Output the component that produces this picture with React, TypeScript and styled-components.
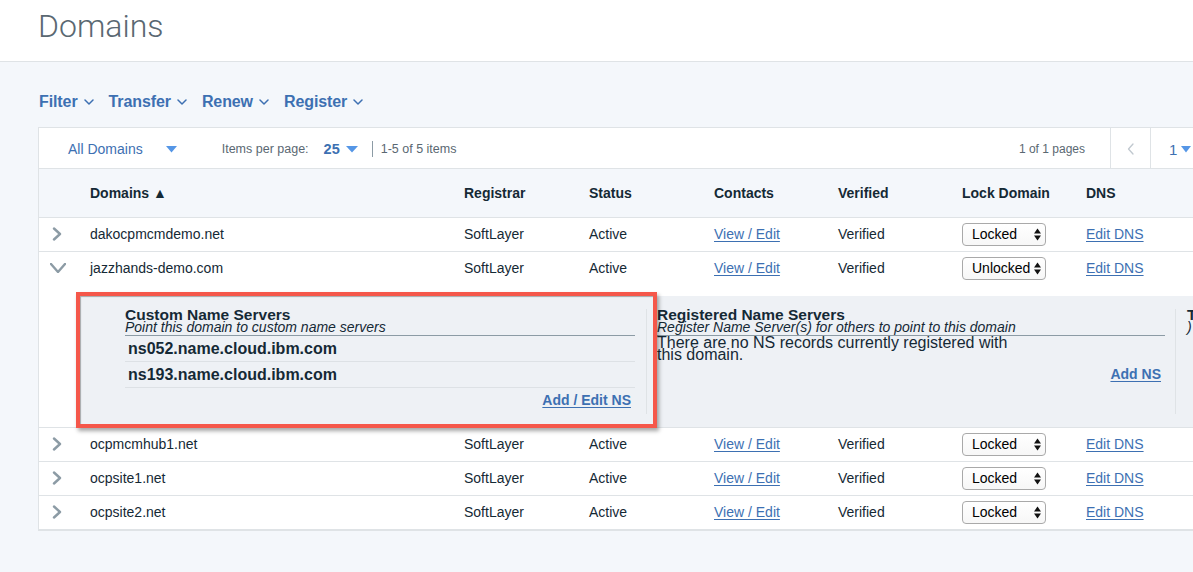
import React from "react";
import styled, { createGlobalStyle } from "styled-components";

const Global = createGlobalStyle`
  html, body { margin: 0; padding: 0; background: #f4f7fb; overflow: hidden; }
  body { font-family: "Liberation Sans", Arial, sans-serif; color: #152935; }
  * { box-sizing: border-box; }
`;

const BLUE = "#3d70b2";
const LIGHTBLUE = "#5596e6";
const BORDER = "#dfe3e6";
const COLS = "51px 374px 125px 125px 124px 124px 124px 1fr";

const Page = styled.div`
  position: relative;
  width: 1193px;
  height: 572px;
  overflow: hidden;
  background: #f4f7fb;
`;

const Header = styled.header`
  height: 62px;
  background: #fff;
  border-bottom: 1px solid ${BORDER};
  padding-left: 38px;
`;

const Title = styled.h1`
  margin: 0;
  padding-top: 7px;
  font-family: Roboto, "Liberation Sans", sans-serif;
  font-weight: 300;
  font-size: 32px;
  line-height: normal;
  color: #5a6872;
`;

const Menu = styled.nav`
  display: flex;
  align-items: center;
  height: 20px;
  margin: 30px 0 15px 39px;
`;

const MenuItem = styled.span`
  display: flex;
  align-items: center;
  gap: 6px;
  margin-right: 15px;
  font-weight: 700;
  font-size: 16px;
  letter-spacing: -0.1px;
  line-height: 20px;
  color: ${BLUE};
`;

const Table = styled.section`
  margin-left: 38px;
  width: 1185px;
  background: #fff;
  border: 1px solid ${BORDER};
`;

const Toolbar = styled.div`
  display: flex;
  align-items: stretch;
  height: 41px;
  border-bottom: 1px solid ${BORDER};
`;

const ToolGroup = styled.div`
  display: flex;
  align-items: center;
  flex: 1;
  padding: 2px 0 0 29px;
`;

const DomainPick = styled.span`
  font-size: 14px;
  color: ${BLUE};
  margin-right: 23px;
`;

const Small = styled.span<{ $ml?: number }>`
  font-size: 12.5px;
  color: #5a6872;
  margin-left: ${(p) => p.$ml ?? 0}px;
`;

const PerPage = styled.span`
  font-size: 14.5px;
  font-weight: 700;
  color: ${BLUE};
  margin: 0 6px 0 15px;
`;

const Sep = styled.span`
  width: 1px;
  height: 16px;
  background: #8c9ba5;
  margin: 0 8px 0 14px;
`;

const PagesInfo = styled.span`
  display: flex;
  align-items: center;
  padding: 2px 25px 0 0;
  font-size: 12px;
  color: #5a6872;
`;

const NavCell = styled.span<{ $w: number; $pl: number }>`
  display: flex;
  align-items: center;
  width: ${(p) => p.$w}px;
  padding: 2px 0 0 ${(p) => p.$pl}px;
  border-left: 1px solid ${BORDER};
  gap: 4px;
  font-size: 15px;
  color: ${BLUE};
`;

const HeadRow = styled.div`
  display: grid;
  grid-template-columns: ${COLS};
  align-items: center;
  height: 49px;
  background: #f4f7fb;
  border-bottom: 1px solid ${BORDER};
  font-size: 14px;
  font-weight: 700;
  color: #152935;
`;

const Row = styled.div<{ $open?: boolean }>`
  display: grid;
  grid-template-columns: ${COLS};
  align-items: center;
  height: ${(p) => (p.$open ? 33 : 34)}px;
  padding-bottom: 1px;
  border-bottom: ${(p) => (p.$open ? "none" : `1px solid ${BORDER}`)};
  font-size: 14px;
  color: #152935;
`;

const ToggleCell = styled.span<{ $open?: boolean }>`
  display: flex;
  align-items: center;
  padding-left: ${(p) => (p.$open ? 11 : 13)}px;
`;

const Link = styled.a`
  color: ${BLUE};
  text-decoration: underline;
  text-underline-offset: 2px;
  cursor: pointer;
`;

const Select = styled.div`
  display: flex;
  align-items: center;
  justify-content: space-between;
  width: 84px;
  height: 23px;
  padding: 0 4px 0 9px;
  border: 1px solid #a9a9a9;
  border-radius: 4px;
  background: linear-gradient(#ffffff, #f7f7f7);
  font-size: 14px;
  color: #000;
`;

const DetailWrap = styled.div`
  padding-top: 11px;
  border-bottom: 1px solid ${BORDER};
`;

const DetailPanel = styled.div`
  display: flex;
  height: 131px;
  margin-left: 40px;
  padding: 13px 0 0 46px;
  background: #eef1f5;
`;

const NsColumn = styled.div<{ $w: number; $pl: number; $pr: number; $divider?: boolean }>`
  flex: none;
  width: ${(p) => p.$w + p.$pl + p.$pr + (p.$divider ? 1 : 0)}px;
  height: 105px;
  padding: 0 ${(p) => p.$pr}px 0 ${(p) => p.$pl}px;
  border-right: ${(p) => (p.$divider ? `1px solid ${BORDER}` : "none")};
  white-space: nowrap;
`;

const NsTitle = styled.div`
  font-size: 15.5px;
  font-weight: 700;
  line-height: 12px;
  height: 12px;
  color: #152935;
`;

const NsSub = styled.div<{ $rule?: boolean }>`
  font-size: 14px;
  font-style: italic;
  line-height: 12px;
  height: 15px;
  padding-bottom: 2px;
  border-bottom: 1px solid ${(p) => (p.$rule === false ? "transparent" : "#8c9ba5")};
  color: #152935;
`;

const NsItem = styled.div`
  height: 26px;
  line-height: 25px;
  padding-left: 3px;
  font-size: 16px;
  font-weight: 700;
  border-bottom: 1px solid #dde1e5;
  color: #152935;
`;

const NsText = styled.div`
  height: 26px;
  padding-top: 1px;
  max-width: 370px;
  white-space: normal;
  font-size: 16px;
  line-height: 12px;
  color: #152935;
`;

const NsAction = styled.div`
  height: 25px;
  line-height: 25px;
  text-align: right;
  padding-right: 4px;
  font-size: 14px;
  font-weight: 700;
`;

const Annotation = styled.div`
  position: absolute;
  left: 76px;
  top: 292px;
  width: 581px;
  height: 136px;
  border: 4px solid #f5574a;
  box-shadow: 2px 3px 4px rgba(0, 0, 0, 0.35), inset 1px 1px 1px rgba(0, 0, 0, 0.3);
  pointer-events: none;
`;

const ChevDown = ({ w = 10, h = 6, color = BLUE, sw = 1.5 }) => (
  <svg width={w} height={h} viewBox={`0 0 ${w} ${h}`} fill="none">
    <polyline points={`1,1 ${w / 2},${h - 1} ${w - 1},1`} stroke={color} strokeWidth={sw} strokeLinecap="round" strokeLinejoin="round" />
  </svg>
);

const ChevRight = () => (
  <svg width="10" height="14" viewBox="0 0 10 14" fill="none">
    <polyline points="2,1.5 8,7 2,12.5" stroke="#8c9ba5" strokeWidth="2.4" strokeLinecap="round" strokeLinejoin="round" />
  </svg>
);

const ChevLeft = () => (
  <svg width="7" height="12" viewBox="0 0 7 12" fill="none">
    <polyline points="6,1 1.5,6 6,11" stroke="#c0c8cf" strokeWidth="1.3" strokeLinecap="round" strokeLinejoin="round" />
  </svg>
);

const Caret = ({ w = 11 }) => (
  <svg width={w} height="7" viewBox={`0 0 ${w} 7`}>
    <polygon points={`0,0 ${w},0 ${w / 2},6.5`} fill={LIGHTBLUE} />
  </svg>
);

const UpDown = () => (
  <svg width="7" height="13" viewBox="0 0 7 13">
    <polygon points="0,5.5 3.5,0.5 7,5.5" fill="#111" />
    <polygon points="0,7.5 3.5,12.5 7,7.5" fill="#111" />
  </svg>
);

type Domain = { name: string; lock: string; open?: boolean };

const domains: Domain[] = [
  { name: "dakocpmcmdemo.net", lock: "Locked" },
  { name: "jazzhands-demo.com", lock: "Unlocked", open: true },
  { name: "ocpmcmhub1.net", lock: "Locked" },
  { name: "ocpsite1.net", lock: "Locked" },
  { name: "ocpsite2.net", lock: "Locked" },
];

const DomainRow = ({ d }: { d: Domain }) => (
  <Row $open={d.open}>
    <ToggleCell $open={d.open}>
      {d.open ? <ChevDown w={16} h={10} color="#8c9ba5" sw={2.4} /> : <ChevRight />}
    </ToggleCell>
    <span>{d.name}</span>
    <span>SoftLayer</span>
    <span>Active</span>
    <span>
      <Link>View / Edit</Link>
    </span>
    <span>Verified</span>
    <span>
      <Select>
        <span>{d.lock}</span>
        <UpDown />
      </Select>
    </span>
    <span>
      <Link>Edit DNS</Link>
    </span>
  </Row>
);

const Detail = () => (
  <DetailWrap>
    <DetailPanel>
      <NsColumn $w={510} $pl={0} $pr={11} $divider>
        <NsTitle>Custom Name Servers</NsTitle>
        <NsSub>Point this domain to custom name servers</NsSub>
        <NsItem>ns052.name.cloud.ibm.com</NsItem>
        <NsItem>ns193.name.cloud.ibm.com</NsItem>
        <NsAction>
          <Link>Add / Edit NS</Link>
        </NsAction>
      </NsColumn>
      <NsColumn $w={508} $pl={10} $pr={10} $divider>
        <NsTitle>Registered Name Servers</NsTitle>
        <NsSub>Register Name Server(s) for others to point to this domain</NsSub>
        <NsText>There are no NS records currently registered with this domain.</NsText>
        <NsAction>
          <Link>Add NS</Link>
        </NsAction>
      </NsColumn>
      <NsColumn $w={300} $pl={11} $pr={0}>
        <NsTitle>Transfer Lock</NsTitle>
        <NsSub $rule={false}>)</NsSub>
      </NsColumn>
    </DetailPanel>
  </DetailWrap>
);

export default function App() {
  return (
    <Page>
      <Global />
      <Header>
        <Title>Domains</Title>
      </Header>
      <Menu>
        {["Filter", "Transfer", "Renew", "Register"].map((m) => (
          <MenuItem key={m}>
            {m}
            <ChevDown />
          </MenuItem>
        ))}
      </Menu>
      <Table>
        <Toolbar>
          <ToolGroup>
            <DomainPick>All Domains</DomainPick>
            <Caret />
            <Small $ml={45}>Items per page:</Small>
            <PerPage>25</PerPage>
            <Caret w={12} />
            <Sep />
            <Small>1-5 of 5 items</Small>
          </ToolGroup>
          <PagesInfo>1 of 1 pages</PagesInfo>
          <NavCell $w={40} $pl={16}>
            <ChevLeft />
          </NavCell>
          <NavCell $w={72} $pl={18}>
            1 <Caret w={10} />
          </NavCell>
        </Toolbar>
        <HeadRow>
          <span />
          <span>Domains ▲</span>
          <span>Registrar</span>
          <span>Status</span>
          <span>Contacts</span>
          <span>Verified</span>
          <span>Lock Domain</span>
          <span>DNS</span>
        </HeadRow>
        {domains.map((d) => (
          <React.Fragment key={d.name}>
            <DomainRow d={d} />
            {d.open && <Detail />}
          </React.Fragment>
        ))}
      </Table>
      <Annotation />
    </Page>
  );
}
